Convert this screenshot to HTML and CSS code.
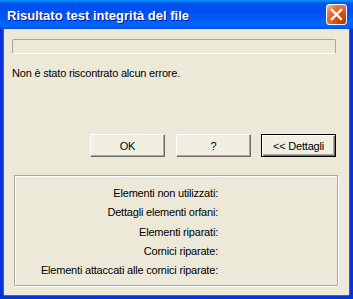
FILE: index.html
```html
<!DOCTYPE html>
<html lang="it">
<head>
  <meta charset="UTF-8" />
  <title>Risultato test integrità del file</title>
  <link rel="stylesheet" href="styles.css">
</head>
<body>
  <div class="window">
    <div class="titlebar">
      <span class="title">Risultato test integrità del file</span>
      <button class="close" aria-label="Chiudi">
        <svg width="13" height="13" viewBox="0 0 13 13">
          <path d="M2 2 L11 11 M11 2 L2 11" stroke="#fff" stroke-width="2.4" stroke-linecap="square"/>
        </svg>
      </button>
    </div>

    <div class="client">
      <div class="progress"></div>
      <p class="message">Non è stato riscontrato alcun errore.</p>

      <div class="buttons">
        <button class="btn">OK</button>
        <button class="btn">?</button>
        <button class="btn default">&lt;&lt; Dettagli</button>
      </div>

      <div class="details">
        <div class="row">Elementi non utilizzati:</div>
        <div class="row">Dettagli elementi orfani:</div>
        <div class="row">Elementi riparati:</div>
        <div class="row">Cornici riparate:</div>
        <div class="row">Elementi attaccati alle cornici riparate:</div>
      </div>
    </div>
  </div>
</body>
</html>
```

FILE: styles.css
```css
:root {
  --face: #ece9d8;
  --light: #fff;
  --shadow: #aca899;
  --dark: #716f64;
  --frame: #0831d9;
}

* {
  box-sizing: border-box;
  margin: 0;
  padding: 0;
}

body {
  width: 353px;
  height: 299px;
  overflow: hidden;
  font-family: Tahoma, "Liberation Sans", Arial, sans-serif;
  font-size: 11px;
  letter-spacing: -0.2px;
  color: #000;
}

.window {
  width: 353px;
  height: 299px;
  display: flex;
  flex-direction: column;
  background: var(--frame);
}

.titlebar {
  height: 29px;
  display: flex;
  align-items: center;
  justify-content: space-between;
  padding: 0 6px 0 7px;
  background: linear-gradient(180deg, #0997ff 0%, #0053ee 12%, #0050ee 40%, #0066ff 85%, #0062f8 92%, #0847d7 100%);
}

.title {
  font-family: "Liberation Sans", Arial, sans-serif;
  font-weight: bold;
  font-size: 13px;
  letter-spacing: 0;
  color: #fff;
  text-shadow: 1px 1px 0 #0f1089;
  padding-top: 1px;
}

.close {
  width: 21px;
  height: 21px;
  display: flex;
  align-items: center;
  justify-content: center;
  border: 1px solid #fff;
  border-radius: 3px;
  background: radial-gradient(circle at 85% 85%, #c23500 0%, #dc5b1f 45%, #e2754b 70%, #f4b89c 95%);
}

.client {
  flex: 1;
  margin: 0 4px 4px;
  background: var(--face);
  padding: 10px 10px 0 8px;
  box-shadow: -1px 0 0 #166aee, 1px 0 0 #166aee, 0 1px 0 #166aee;
}

.progress {
  width: 324px;
  height: 15px;
  border: 1px solid var(--shadow);
  border-bottom-color: #fff;
  border-radius: 2px;
}

.message {
  margin-top: 13px;
  line-height: 13px;
}

.buttons {
  display: flex;
  justify-content: flex-end;
  gap: 10px;
  margin-top: 54px;
  padding-right: 3px;
}

.btn {
  width: 75px;
  height: 23px;
  font: inherit;
  letter-spacing: inherit;
  color: #000;
  background: #f1efe2;
  border: 1px solid;
  border-color: var(--light) var(--dark) var(--dark) var(--light);
  box-shadow: inset -1px -1px 0 var(--shadow);
}

.btn:first-child {
  margin-right: 1px;
}

.btn.default {
  border-color: #000;
  box-shadow: inset 1px 1px 0 var(--light), inset -1px -1px 0 var(--dark), inset -2px -2px 0 var(--shadow);
}

.details {
  width: 324px;
  height: 111px;
  margin: 18px 0 0 2px;
  padding: 11px 0 0;
  border: 1px solid var(--shadow);
  box-shadow: inset 1px 1px 0 #fff, 1px 1px 0 #fff;
}

.row {
  width: 203px;
  height: 19.3px;
  line-height: 13px;
  text-align: right;
}
```
